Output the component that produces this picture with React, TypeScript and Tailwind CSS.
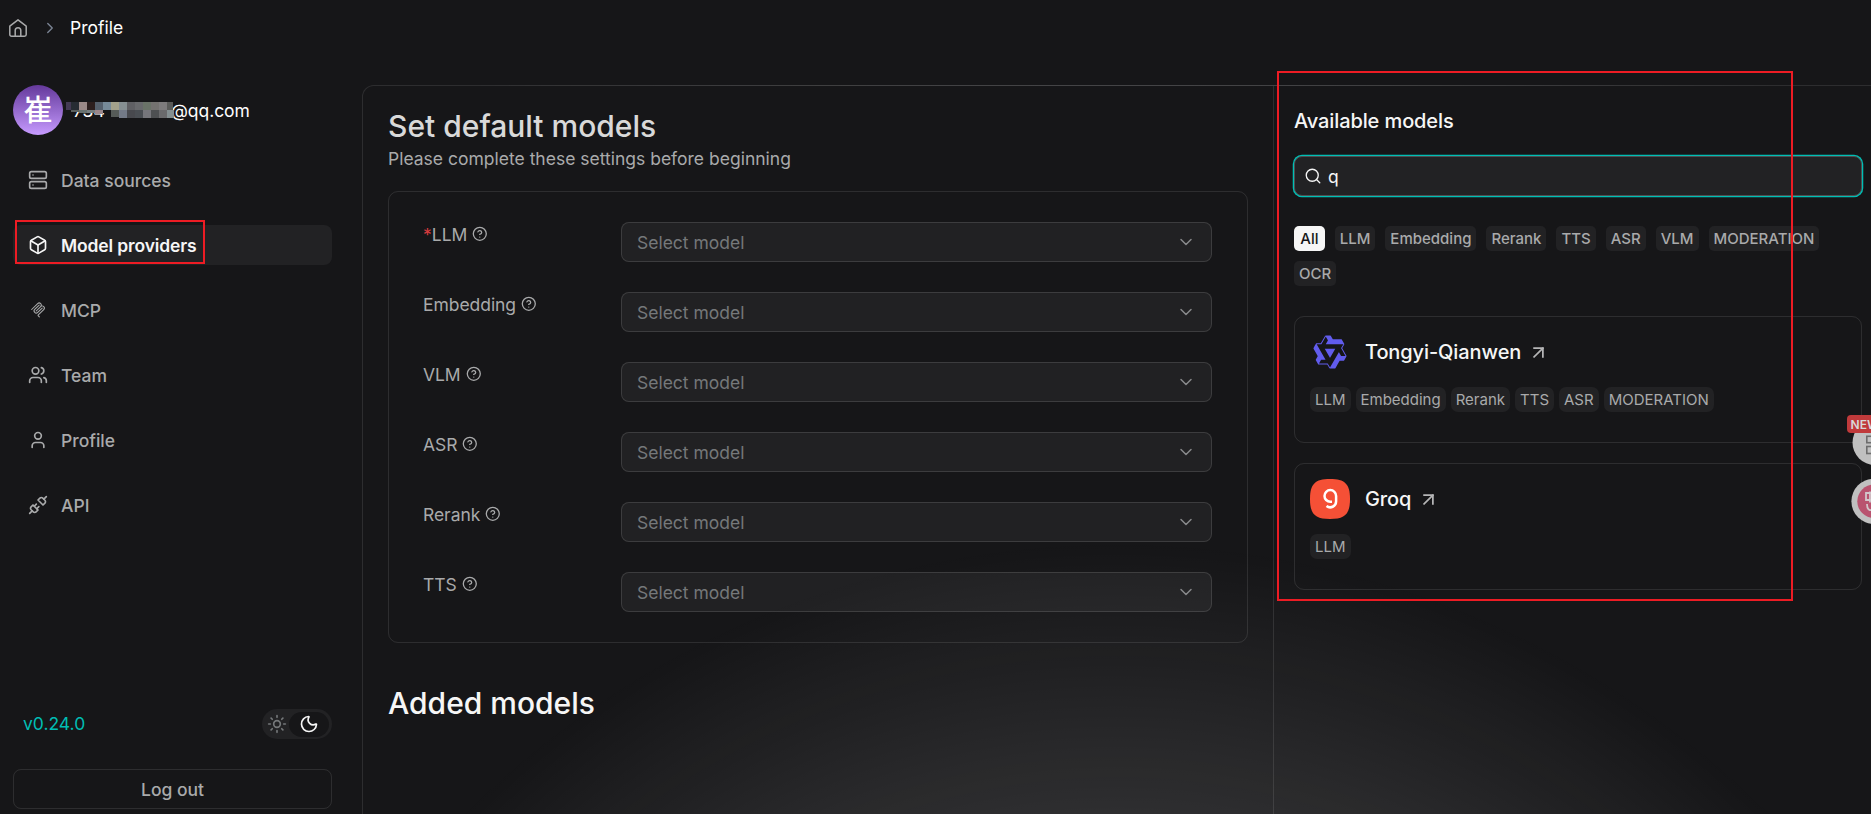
import { useState } from "react";
import { ArrowUpRight, Box, ChevronDown, ChevronRight, CircleHelp, Moon, Search, Server, Sun, Unplug, User, Users } from "lucide-react";

const MCP_PATH =
  "M15.688 2.343a2.588 2.588 0 00-3.61 0l-9.626 9.44a.863.863 0 01-1.203 0 .823.823 0 010-1.18l9.626-9.44a4.313 4.313 0 016.016 0 4.116 4.116 0 011.204 3.54 4.3 4.3 0 013.609 1.18l.05.05a4.115 4.115 0 010 5.9l-8.706 8.537a.274.274 0 000 .393l1.788 1.754a.823.823 0 010 1.18.863.863 0 01-1.203 0l-1.788-1.753a1.92 1.92 0 010-2.754l8.706-8.538a2.47 2.47 0 000-3.54l-.05-.049a2.588 2.588 0 00-3.607-.003l-7.172 7.034-.002.002-.098.097a.863.863 0 01-1.204 0 .823.823 0 010-1.18l7.273-7.133a2.47 2.47 0 00-.003-3.537zM14.485 4.703a.823.823 0 000-1.18.863.863 0 00-1.204 0l-7.119 6.982a4.115 4.115 0 000 5.9 4.314 4.314 0 006.016 0l7.12-6.982a.823.823 0 000-1.18.863.863 0 00-1.204 0l-7.119 6.982a2.588 2.588 0 01-3.61 0 2.47 2.47 0 010-3.54l7.12-6.982z";

const QWEN_PATH =
  "M12.604 1.34c.393.69.784 1.382 1.174 2.075a.18.18 0 00.157.091h5.552c.174 0 .322.11.446.327l1.454 2.57c.19.337.24.478.024.837-.26.43-.513.864-.76 1.3l-.367.658c-.106.196-.223.28-.04.512l2.652 4.637c.172.301.111.494-.043.77-.437.785-.882 1.564-1.335 2.34-.159.272-.352.375-.68.37-.777-.016-1.552-.01-2.327.016a.099.099 0 00-.081.05 575.097 575.097 0 01-2.705 4.74c-.169.293-.38.363-.725.364-.997.003-2.002.004-3.017.002a.537.537 0 01-.465-.271l-1.335-2.323a.09.09 0 00-.083-.049H4.982c-.285.03-.553-.001-.805-.092l-1.603-2.77a.543.543 0 01-.002-.54l1.207-2.12a.198.198 0 000-.197 550.951 550.951 0 01-1.875-3.272l-.79-1.395c-.16-.31-.173-.496.095-.965.465-.813.927-1.625 1.387-2.436.132-.234.304-.334.584-.335a338.3 338.3 0 012.589-.001.124.124 0 00.107-.063l2.806-4.895a.488.488 0 01.422-.246c.524-.001 1.053 0 1.583-.006L11.704 1c.341-.003.724.032.9.34zm-3.432.403a.06.06 0 00-.052.03L6.254 6.788a.157.157 0 01-.135.078H3.253c-.056 0-.07.025-.041.074l5.81 10.156c.025.042.013.062-.034.063l-2.795.015a.218.218 0 00-.2.116l-1.32 2.31c-.044.078-.021.118.068.118l5.716.008c.046 0 .08.02.104.061l1.403 2.454c.046.081.092.082.139 0l5.006-8.76.783-1.382a.055.055 0 01.096 0l1.424 2.53a.122.122 0 00.107.062l2.763-.02a.04.04 0 00.035-.02.041.041 0 000-.04l-2.9-5.086a.108.108 0 010-.113l.293-.507 1.12-1.977c.024-.041.012-.062-.035-.062H9.2c-.059 0-.073-.026-.043-.077l1.434-2.505a.107.107 0 000-.114L9.225 1.774a.06.06 0 00-.053-.031zm6.29 8.02c.046 0 .058.02.034.06l-.832 1.465-2.613 4.585a.056.056 0 01-.05.029.058.058 0 01-.05-.029L8.498 9.841c-.02-.034-.01-.052.028-.054l.216-.012 6.722-.012z";

function McpIcon() {
  return (
    <svg width="20" height="20" viewBox="-4 -4 32 32" fill="currentColor"><path d={MCP_PATH}/></svg>
  );
}

// pixelated blocks that hide the mail address: [x, y, width, height, fill]
const MOSAIC: [number, number, number, number, string][] = [
  [0, 0, 5, 8, "#443a54"], [5, 0, 8, 8, "#272c33"], [13, 0, 8, 8, "#9a8987"], [21, 0, 8, 8, "#2c1f1e"],
  [29, 0, 8, 8, "#55606c"], [37, 0, 8, 8, "#768a98"], [45, 0, 8, 8, "#a3a18b"], [53, 0, 8, 8, "#868f92"],
  [61, 0, 8, 8, "#5f5f63"], [69, 0, 8, 8, "#68696c"], [77, 0, 8, 8, "#6a7368"], [85, 0, 8, 8, "#747270"],
  [93, 0, 8, 8, "#7d7b7c"], [101, 0, 6, 8, "#5a5b59"],
  [5, 8, 8, 2, "#5a605e"], [13, 8, 8, 3, "#66706f"], [21, 8, 8, 3, "#767e80"], [29, 8, 8, 4, "#9a878b"],
  [45, 8, 8, 7, "#565b58"], [53, 8, 8, 8, "#737a87"], [61, 8, 8, 8, "#48494e"], [69, 8, 8, 8, "#4a4e53"],
  [77, 8, 8, 8, "#76767b"], [85, 8, 8, 8, "#4e5052"], [93, 8, 8, 8, "#6a6a6c"], [101, 8, 7, 8, "#848f91"],
];

const menu = [
  { label: "Data sources", icon: <Server size={20} strokeWidth={2}/> },
  { label: "Model providers", icon: <Box size={20} strokeWidth={2}/>, active: true },
  { label: "MCP", icon: <McpIcon/> },
  { label: "Team", icon: <Users size={20} strokeWidth={2}/> },
  { label: "Profile", icon: <User size={20} strokeWidth={2}/> },
  { label: "API", icon: <Unplug size={20} strokeWidth={2}/> },
];

function Sidebar() {
  return (
    <aside className="w-[362px] flex-shrink-0 flex flex-col pl-[13px] pr-[30px] pt-[30px]">
      <div className="flex items-center h-[50px]">
        <div className="w-[50px] h-[50px] rounded-full bg-linear-to-b from-[#65399b] to-[#c79bff] flex items-center justify-center text-white text-[29px] leading-none font-medium font-['Noto_Sans_CJK_SC',sans-serif]">
          <span className="relative -top-[2px]">崔</span>
        </div>
        <div className="relative flex items-center ml-[10px] pt-[2px] text-[17.5px] text-white">
          <span className="w-[98px]">734</span>
          <span className="tracking-[-0.05px]">@qq.com</span>
          <svg className="absolute -left-[7px] top-[6px]" width="108" height="16" viewBox="0 0 108 16" shapeRendering="crispEdges">
            {MOSAIC.map(([x, y, w, h, fill]) => <rect key={`${x}-${y}`} x={x} y={y} width={w} height={h} fill={fill}/>)}
          </svg>
        </div>
      </div>

      <nav className="flex flex-col gap-[25px] mt-[25px]">
        {menu.map(m => (
          <button key={m.label} className={`relative w-full h-10 flex items-center gap-[13px] pl-[15px] rounded-lg text-[17.5px] text-left ${m.active ? "bg-[#222224] text-[#f6f6f6] font-semibold tracking-[-0.13px]" : "text-[#a9aaab] font-medium"}`}>
            {m.icon}
            <span className="pt-[2px]">{m.label}</span>
            {m.active && <span className="absolute left-[2px] -top-[5px] w-[190px] h-[44px] border-2 border-[#ed1c24]"/>}
          </button>
        ))}
      </nav>

      <div className="mt-auto flex items-center justify-between pl-[10px] mb-[30px]">
        <span className="text-[17.5px] text-[#00beb4]">v0.24.0</span>
        <div className="w-[70px] h-[30px] rounded-full bg-[#222224] flex items-center pl-[5px] pr-[3px] justify-between">
          <Sun size={20} strokeWidth={2} className="text-[#75787a]"/>
          <div className="w-10 h-[25px] rounded-full bg-[#161618] flex items-center justify-center"><Moon size={20} strokeWidth={2} className="text-[#f6f6f6]"/></div>
        </div>
      </div>
      <button className="h-10 mb-[5px] pt-[2px] flex-shrink-0 border border-white/10 rounded-lg text-[17.5px] font-medium text-[#a9aaab]">Log out</button>
    </aside>
  );
}

function DefaultModels() {
  const fields = ["LLM", "Embedding", "VLM", "ASR", "Rerank", "TTS"];
  return (
    <section className="w-[910px] flex-shrink-0 pl-[25px] pr-[25px] pt-[21px]">
      <h1 className="text-[30px] leading-[38px] font-medium text-[#d9d9d9]">Set default models</h1>
      <p className="text-[17.5px] leading-[25px] mt-[1px] text-[#a9aaab]">Please complete these settings before beginning</p>
      <div className="mt-[20px] border border-white/10 rounded-[10px] pl-[34px] pr-[35px] py-[30px] flex flex-col gap-[30px]">
        {fields.map(f => (
          <div key={f} className="flex items-start h-10">
            <div className="w-[198px] flex items-center text-[17.5px] leading-[25px] text-[#a9aaab]">
              {f === "LLM" && <span className="text-[#d83b3e]">*</span>}
              <span className="tracking-[-0.05px]">{f}</span>
              <CircleHelp size={15.6} strokeWidth={2} className="ml-[5px] -mt-[2px]"/>
            </div>
            <button className="flex-1 h-10 flex items-center justify-between px-[15px] border border-white/12 bg-white/5 rounded-lg text-[17.5px] text-[#75787a]">
              <span className="pt-[2px]">Select model</span>
              <ChevronDown size={20} strokeWidth={1.8} className="text-[#88898b]"/>
            </button>
          </div>
        ))}
      </div>
      <h2 className="mt-[41px] text-[30px] leading-[38px] font-medium text-[#f6f6f6]">Added models</h2>
    </section>
  );
}

const tags = ["All", "LLM", "Embedding", "Rerank", "TTS", "ASR", "VLM", "MODERATION", "OCR"];

const providers = [
  {
    name: "Tongyi-Qianwen",
    tags: ["LLM", "Embedding", "Rerank", "TTS", "ASR", "MODERATION"],
    logo: <svg width="40" height="40" viewBox="-1.33 -1.33 26.66 26.66" fill="#615ced"><path d={QWEN_PATH}/></svg>,
  },
  {
    name: "Groq",
    tags: ["LLM"],
    logo: (
      <svg width="40" height="40" viewBox="0 0 40 40" fill="none">
        <path d="M20 0C35 0 40 5 40 20S35 40 20 40 0 35 0 20 5 0 20 0z" fill="#f55036"/>
        <path d="M22 22.7h-1.7a5.800 5.800 0 1 1 5.800-5.800v5.600a5.900 5.900 0 0 1-9.600 4.500" stroke="#fff" strokeWidth="2.5"/>
      </svg>
    ),
  },
];

function AvailableModels() {
  const [tag, setTag] = useState("All");
  const [query, setQuery] = useState("q");
  return (
    <section className="flex-1 min-w-0 border-l border-white/10 pl-5 pr-[9px] pt-[20px]">
      <h2 className="text-[20px] leading-[30px] font-medium tracking-[-0.1px] text-[#f6f6f6]">Available models</h2>
      <div className="mt-[20px] h-10 flex items-center gap-[6px] px-[9px] rounded-lg border border-[#4f4f51] bg-[#222224] ring-[1.25px] ring-[#00beb4]">
        <Search size={18} strokeWidth={1.8} className="text-[#f6f6f6]"/>
        <input value={query} onChange={e => setQuery(e.target.value)} className="flex-1 pt-[2px] bg-transparent outline-none text-[17.5px] text-[#f6f6f6]"/>
      </div>
      <div className="mt-[30px] flex flex-wrap gap-[10px]">
        {tags.map(t => (
          <button key={t} onClick={() => setTag(t)} className={`h-[25px] rounded-[5px] text-[15px] leading-[25px] font-medium ${tag === t ? "px-[6.25px] bg-[#f6f6f6] text-[#161618]" : "px-[5px] bg-[#222224] text-[#a9aaab]"}`}>{t}</button>
        ))}
      </div>
      <div className="mt-[30px] flex flex-col gap-5">
        {providers.map(p => (
          <div key={p.name} className="h-[127px] border border-white/10 rounded-[10px] p-[15px]">
            <div className="flex items-center h-10">
              {p.logo}
              <span className="ml-[15px] text-[20px] font-medium tracking-[-0.1px] text-[#f6f6f6]">{p.name}</span>
              <ArrowUpRight size={21} strokeWidth={2} className="ml-[7px] text-[#b5b5b6]" strokeLinecap="square" strokeLinejoin="miter"/>
            </div>
            <div className="mt-[15px] flex gap-[5px]">
              {p.tags.map(t => <span key={t} className="h-[25px] px-[5px] rounded-[7px] bg-[#222224] text-[15px] leading-[25px] text-[#a9aaab]">{t}</span>)}
            </div>
          </div>
        ))}
      </div>
    </section>
  );
}

function FloatingTools() {
  return (
    <div className="absolute right-0 top-[415px] w-[24px] h-[112px] overflow-hidden">
      <svg width="48" height="112" viewBox="0 0 48 112" fill="none">
        <circle cx="28" cy="27.5" r="22.5" fill="#c0c0c0"/>
        <g stroke="#6d6d6d" strokeWidth="1.6">
          <rect x="19.8" y="21.3" width="7" height="6.4"/><rect x="19.8" y="31.5" width="7" height="7"/>
        </g>
        <rect x="0" y="0" width="44" height="18" rx="4" fill="#c03a3b"/>
        <text x="3.6" y="13.5" fill="#d9d9d9" fontSize="12" fontWeight="600" fontFamily="Inter, sans-serif">NEW</text>
        <circle cx="27" cy="86.3" r="22.6" fill="#c0c0c0"/>
        <circle cx="27" cy="86.3" r="16.7" fill="#b9536f"/>
        <g stroke="#d2c6ca" strokeWidth="1.8">
          <path d="M25 78h-6v7h6M23 76.5v11M20 89c0 4 1.5 6.200 4 6.200"/>
        </g>
      </svg>
    </div>
  );
}

export default function App() {
  return (
    <div className="relative w-full h-[814px] overflow-hidden flex flex-col bg-[#161618] font-[Inter,'Noto_Sans_CJK_SC',sans-serif]">
      <header className="h-[55px] flex-shrink-0 flex items-center pl-[8px] text-[17.5px] text-white">
        <svg width="20" height="20" viewBox="0 0 20 20" fill="none" stroke="#a9aaab" strokeWidth="1.5" strokeLinejoin="round">
          <path d="M1.800 8.200 10 1.800l8.200 6.400v8.300a1.700 1.700 0 0 1-1.700 1.700h-13a1.700 1.700 0 0 1-1.700-1.700z"/>
          <path d="M7.200 18v-5.500a2.800 2.800 0 0 1 5.600 0V18"/>
        </svg>
        <ChevronRight size={18} strokeWidth={1.8} className="ml-[13px] text-[#7b8494]"/>
        <span className="ml-[11px] pt-[2px]">Profile</span>
      </header>

      <div className="flex-1 min-h-0 flex">
        <Sidebar/>
        <main className="flex-1 min-w-0 mt-[30px] flex border-t border-l border-white/10 rounded-tl-[12px] bg-[radial-gradient(circle_at_50%_190%,rgba(255,255,255,0.36)_0%,rgba(255,255,255,0)_59%)]">
          <DefaultModels/>
          <AvailableModels/>
        </main>
      </div>

      <FloatingTools/>
      {/* highlight around the provider search */}
      <div className="absolute left-[1277px] top-[71px] w-[516px] h-[530px] border-2 border-[#ed1c24] pointer-events-none"/>
    </div>
  );
}
